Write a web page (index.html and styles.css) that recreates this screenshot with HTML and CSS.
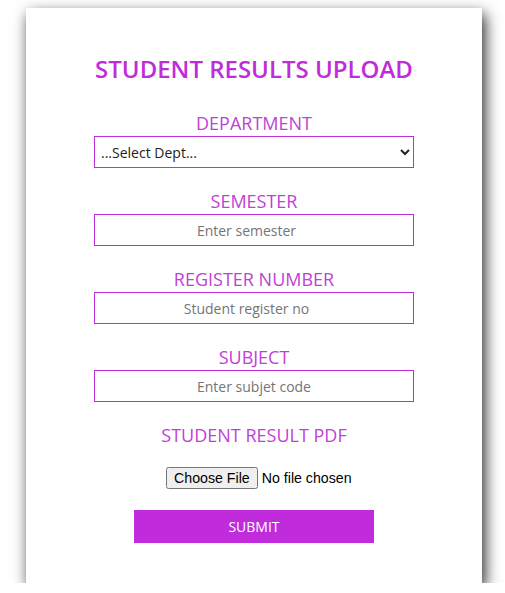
FILE: index.html
```html
<!DOCTYPE html>
<html>
<head>
<meta charset="utf-8">
<link rel="stylesheet" href="styles.css">
</head>
<body>
<div class="card">
  <form class="form">
    <h2 class="title">STUDENT RESULTS UPLOAD</h2>
    <div class="field">
      <label class="label">DEPARTMENT</label>
      <select class="control select">
        <option>...Select Dept...</option>
      </select>
    </div>
    <div class="field">
      <label class="label">SEMESTER</label>
      <input class="control" type="number" placeholder="Enter semester">
    </div>
    <div class="field">
      <label class="label">REGISTER NUMBER</label>
      <input class="control" type="number" placeholder="Student register no">
    </div>
    <div class="field">
      <label class="label">SUBJECT</label>
      <input class="control" type="text" placeholder="Enter subjet code">
    </div>
    <div class="field field-file">
      <label class="label">STUDENT RESULT PDF</label>
      <input class="file" type="file">
    </div>
    <button class="submit" type="button">SUBMIT</button>
  </form>
</div>
</body>
</html>
```
FILE: styles.css
```css
html, body {
  margin: 0;
  padding: 0;
  background: #fff;
}
body {
  padding-top: 8px;
  font-family: "Open Sans", sans-serif;
}
.card {
  width: 456px;
  height: 575px;
  margin-left: 26px;
  background: #fff;
  box-shadow: 3px 6px 14px rgba(0, 0, 0, 0.85);
  box-sizing: border-box;
  padding-top: 48px;
}
.form {
  display: flex;
  flex-direction: column;
  align-items: center;
}
.title {
  margin: 0 0 29px;
  font-size: 24px;
  line-height: 26px;
  font-weight: 600;
  color: #c02bdc;
}
.field {
  display: flex;
  flex-direction: column;
  align-items: center;
  width: 320px;
  margin-bottom: 21px;
}
.field-file {
  margin-bottom: 21px;
}
.label {
  font-size: 18px;
  line-height: 25px;
  color: #c13fd6;
}
.control {
  width: 320px;
  height: 32px;
  box-sizing: border-box;
  border: 1px solid #c02bdc;
  border-radius: 0;
  background: #fff;
  font-family: "Open Sans", sans-serif;
  font-size: 14px;
  color: #333;
  text-align: center;
  outline: none;
  padding: 0 4px;
}
.control::placeholder {
  color: #757575;
}
.select {
  text-align: left;
  padding-left: 2px;
  color: #222;
}
.file {
  align-self: flex-start;
  margin-top: 19px;
  margin-left: 72px;
  width: 192px;
  font-family: "Liberation Sans", Arial, sans-serif;
  font-size: 14.2px;
}
.submit {
  width: 240px;
  height: 33px;
  border: none;
  background: #c02bdc;
  color: #fff;
  font-family: "Open Sans", sans-serif;
  font-size: 14px;
  font-weight: 500;
}
```
